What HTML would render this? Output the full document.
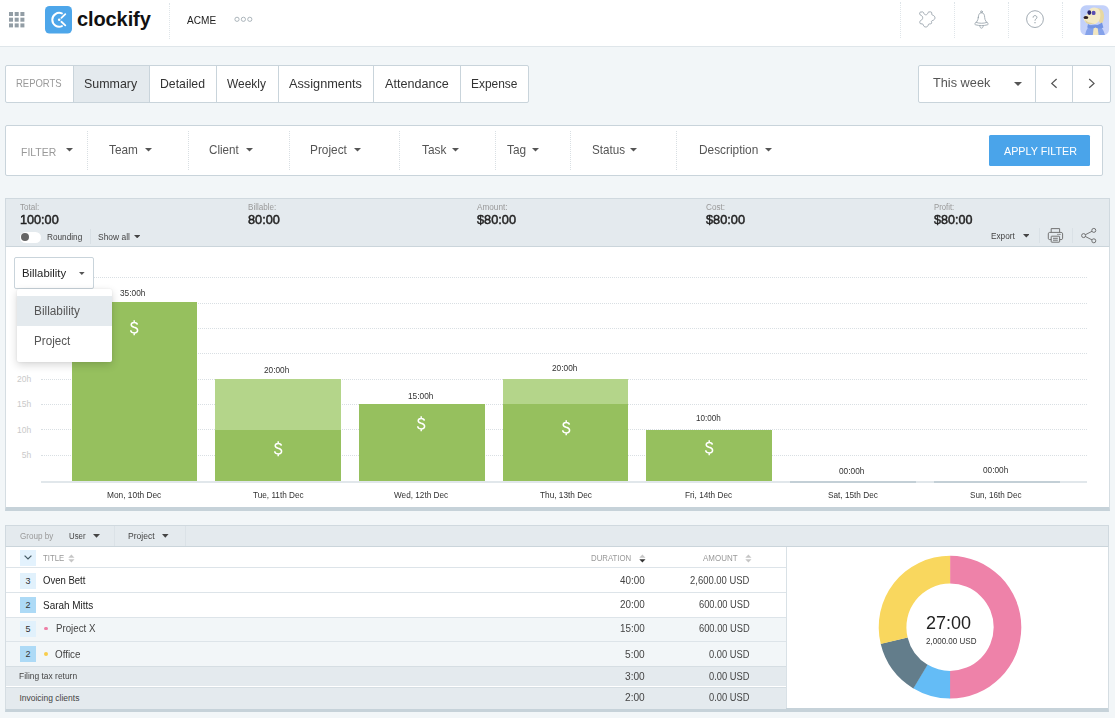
<!DOCTYPE html>
<html>
<head>
<meta charset="utf-8">
<title>Clockify - Summary report</title>
<style>
*{box-sizing:border-box;margin:0;padding:0}
html,body{width:1115px;height:718px;overflow:hidden}
body{background:#f2f6f8;font-family:"Liberation Sans",sans-serif;color:#333;position:relative}
.abs{position:absolute}
.t{position:absolute;white-space:nowrap;line-height:1;transform-origin:0 50%}
#hdr{position:absolute;left:0;top:0;width:1115px;height:47px;background:#fff;border-bottom:1.5px solid #dfe6ea}
.vdot{position:absolute;width:0;border-left:1px dotted #dfe5e9}
</style>
</head>
<body>
<div id="hdr">
 <!-- apps grid -->
 <svg class="abs" style="left:9px;top:12px" width="16" height="16" viewBox="0 0 16 16"><g fill="#929da5">
  <rect x="0" y="0" width="4" height="4"/><rect x="5.7" y="0" width="4" height="4"/><rect x="11.4" y="0" width="4" height="4"/>
  <rect x="0" y="5.7" width="4" height="4"/><rect x="5.7" y="5.7" width="4" height="4"/><rect x="11.4" y="5.7" width="4" height="4"/>
  <rect x="0" y="11.4" width="4" height="4"/><rect x="5.7" y="11.4" width="4" height="4"/><rect x="11.4" y="11.4" width="4" height="4"/>
 </g></svg>
 <!-- logo -->
 <svg class="abs" style="left:45px;top:6px" width="27" height="28" viewBox="0 0 27 28">
  <rect x="0" y="0" width="27" height="27.5" rx="4.5" fill="#4da6ea"/>
  <path d="M16.9 7.45 A6.9 6.9 0 1 0 16.9 20.15" fill="none" stroke="#fff" stroke-width="2" stroke-linecap="round"/>
  <path d="M16.4 11.85 L20.3 8.2 M16.4 15.75 L20.3 19.4" fill="none" stroke="#fff" stroke-width="1.8" stroke-linecap="round"/>
  <circle cx="14.2" cy="13.8" r="1.3" fill="#fff"/>
 </svg>
 <div class="t" id="brand" style="left:77px;top:8.5px;font-size:20px;font-weight:bold;color:#111;letter-spacing:-0.1px">clockify</div>
 <div class="vdot" style="left:169px;top:3px;height:36px"></div>
 <div class="t" style="left:187.3px;top:14.6px;font-size:10.5px;color:#222;transform:scaleX(0.96)">ACME</div>
 <svg class="abs" style="left:233px;top:15px" width="22" height="9" viewBox="0 0 22 9"><g fill="none" stroke="#98a3ab" stroke-width="0.8">
  <circle cx="4" cy="4.3" r="2.1"/><circle cx="10.4" cy="4.3" r="2.1"/><circle cx="16.8" cy="4.3" r="2.1"/></g></svg>
 <div class="vdot" style="left:900px;top:2px;height:36px"></div>
 <div class="vdot" style="left:954px;top:2px;height:36px"></div>
 <div class="vdot" style="left:1008px;top:2px;height:36px"></div>
 <div class="vdot" style="left:1062px;top:2px;height:36px"></div>
 <!-- puzzle -->
 <svg class="abs" style="left:917px;top:10px" width="20" height="19" viewBox="0 0 20 19"><path d="M 3.45 2.09 L 5.70 1.91 C 6.49 1.98 6.71 2.88 6.96 3.61 C 7.33 4.51 8.05 4.77 8.78 4.77 C 9.50 4.77 10.22 4.51 10.59 3.61 C 10.84 2.88 11.06 1.98 11.86 1.91 L 13.74 1.91 C 14.46 1.98 14.75 2.34 14.75 3.07 L 14.75 4.33 C 14.83 4.88 15.30 5.06 15.84 5.24 C 17.29 5.71 17.94 6.69 17.94 7.78 C 17.94 8.86 17.29 9.95 15.84 10.42 C 15.12 10.64 14.39 10.86 14.39 11.58 L 14.68 12.74 C 14.68 13.46 14.32 13.75 13.67 13.83 L 12.22 13.97 C 11.49 14.04 11.35 14.48 11.20 15.02 C 10.95 16.29 10.04 17.01 8.78 17.01 C 7.51 17.01 6.60 16.29 6.35 15.02 C 6.20 14.48 6.06 14.04 5.33 13.97 L 3.81 13.75 C 3.09 13.68 2.80 13.32 2.80 12.67 L 2.87 11.58 C 2.94 10.86 3.52 10.57 4.07 10.31 C 5.15 9.77 5.70 8.86 5.70 7.78 C 5.70 6.69 5.15 5.86 4.07 5.35 C 3.34 5.06 2.72 4.70 2.62 3.97 L 2.72 3.07 C 2.80 2.45 3.01 2.16 3.45 2.09 Z" fill="none" stroke="#98a3ab" stroke-width="0.9" stroke-linejoin="round"/></svg>
 <!-- bell -->
 <svg class="abs" style="left:972px;top:9px" width="20" height="22" viewBox="0 0 20 22"><g fill="none" stroke="#98a3ab" stroke-width="0.85" stroke-linejoin="round" stroke-linecap="round">
  <path d="M6.3 8.6 C6.3 5.8 7.4 3.7 9.5 3.7 C11.6 3.7 12.7 5.8 12.7 8.6 C12.9 11.4 14.4 13.2 16.1 14.4 C16.5 15 16.2 15.6 15.4 15.8 C11.6 16.9 7.4 16.9 3.6 15.8 C2.8 15.6 2.5 15 2.9 14.4 C4.6 13.2 6.1 11.4 6.3 8.6 Z"/>
  <circle cx="9.5" cy="2.8" r="0.9"/>
  <path d="M4.2 13.4 C7.6 14.6 11.4 14.6 14.8 13.4"/>
  <path d="M7.8 17.1 C8 18.5 8.7 19.2 9.5 19.2 C10.3 19.2 11 18.5 11.2 17.1"/></g></svg>
 <!-- help -->
 <svg class="abs" style="left:1025px;top:9px" width="20" height="20" viewBox="0 0 20 20"><circle cx="10" cy="10.1" r="8.4" fill="none" stroke="#98a3ab" stroke-width="0.9"/>
  <path d="M8.1 8.6 C8.1 7.2 9 6.6 10 6.6 C11 6.6 11.9 7.3 11.9 8.4 C11.9 9.8 10 10 10 11.7" fill="none" stroke="#98a3ab" stroke-width="1"/><circle cx="10" cy="13.7" r="0.65" fill="#929da5"/></svg>
 <!-- avatar -->
 <svg class="abs" style="left:1080px;top:4.5px" width="29.5" height="30.5" viewBox="0 0 29.5 30.5">
  <defs><clipPath id="avc"><rect x="0.3" y="0.2" width="28.8" height="30" rx="6"/></clipPath>
  <linearGradient id="avg" x1="0" y1="0" x2="1" y2="1"><stop offset="0" stop-color="#bccdf9"/><stop offset="1" stop-color="#cdd6fb"/></linearGradient>
  <filter id="avb" x="-10%" y="-10%" width="120%" height="120%"><feGaussianBlur stdDeviation="0.45"/></filter></defs>
  <g clip-path="url(#avc)">
   <rect width="29.5" height="30.5" fill="url(#avg)"/>
   <g filter="url(#avb)">
   <path d="M5 30.5 C6 24 9 20 14 19.5 C19 19 23.5 23 25 30.5 Z" fill="#85a2ea"/>
   <path d="M13.6 23 C15 21.6 17 21.8 17.8 23.4 L18.6 30.5 L12.8 30.5 Z" fill="#f1e6c2"/>
   <path d="M17 3.4 C21.5 2.6 24.4 7 24 12 C23.6 16 22.6 18.6 21 18.6 C19.4 18.6 18.6 15 18 12 Z" fill="#e7d8a2"/>
   <path d="M8.4 6.4 C9.6 2.6 14 1.6 17.2 3.2 C20.4 4.8 21 10 19.8 14 C18.8 17.6 15.6 19.6 12.4 19.2 C9.2 18.8 5.4 17.6 4.2 15.4 C3 13.2 4 11.8 5.6 10.6 C7 9.6 7.8 8.2 8.4 6.4 Z" fill="#f4eac6"/>
   <path d="M5 14.6 C7 17.4 11 18.6 14.6 18 C12 19.8 8 19.4 5.8 17.4 Z" fill="#e2d4a0"/>
   <ellipse cx="9.3" cy="7.6" rx="1.9" ry="2.3" fill="#26246a"/>
   <ellipse cx="13.6" cy="7.9" rx="2" ry="2.2" fill="#5a4db2"/>
   <ellipse cx="5.9" cy="12.6" rx="2.4" ry="1.5" fill="#2b1c22"/>
   <path d="M8 19 C12 21.6 18 20.8 22 17.6 L23.4 22.4 C20 24.4 17.6 23.4 15.6 22.4 C13 24 9.6 23.6 7.2 22.4 Z" fill="#7394e4"/>
   </g>
  </g>
 </svg>
</div>
<!-- TABS -->
<div class="abs" style="left:5px;top:64.5px;width:524px;height:38px;background:#fff;border:1px solid #c9d4db;border-radius:2px"></div>
<div class="abs" style="left:73.5px;top:65.5px;width:75.5px;height:36px;background:#e4eaee"></div>
<div class="abs" style="left:73px;top:65.5px;width:1px;height:36px;background:#c9d4db"></div>
<div class="abs" style="left:149px;top:65.5px;width:1px;height:36px;background:#c9d4db"></div>
<div class="abs" style="left:216px;top:65.5px;width:1px;height:36px;background:#c9d4db"></div>
<div class="abs" style="left:278px;top:65.5px;width:1px;height:36px;background:#c9d4db"></div>
<div class="abs" style="left:373px;top:65.5px;width:1px;height:36px;background:#c9d4db"></div>
<div class="abs" style="left:459.5px;top:65.5px;width:1px;height:36px;background:#c9d4db"></div>
<div class="t" style="left:15.80px;top:78.77px;font-size:10.2px;color:#999;transform:scaleX(0.9303);">REPORTS</div>
<div class="t" style="left:84.20px;top:77.96px;font-size:12.8px;color:#333;transform:scaleX(0.9715);">Summary</div>
<div class="t" style="left:159.80px;top:77.96px;font-size:12.8px;color:#333;transform:scaleX(0.9582);">Detailed</div>
<div class="t" style="left:227.40px;top:77.96px;font-size:12.8px;color:#333;transform:scaleX(0.9322);">Weekly</div>
<div class="t" style="left:289.30px;top:77.96px;font-size:12.8px;color:#333;transform:scaleX(0.9949);">Assignments</div>
<div class="t" style="left:384.60px;top:77.96px;font-size:12.8px;color:#333;transform:scaleX(0.9851);">Attendance</div>
<div class="t" style="left:471.00px;top:77.96px;font-size:12.8px;color:#333;transform:scaleX(0.9335);">Expense</div>
<div class="abs" style="left:918px;top:64.5px;width:192.5px;height:38px;background:#fff;border:1px solid #c9d4db;border-radius:2px"></div>
<div class="abs" style="left:1035px;top:65.5px;width:1px;height:36px;background:#c9d4db"></div>
<div class="abs" style="left:1071.5px;top:65.5px;width:1px;height:36px;background:#c9d4db"></div>
<div class="t" style="left:933.20px;top:75.83px;font-size:13.2px;color:#555;transform:scaleX(0.9660);">This week</div>
<svg class="abs" style="left:1014.30px;top:82.00px" width="8" height="4" viewBox="0 0 8 4"><path d="M0 0 L8 0 L4.0 4 Z" fill="#555"/></svg>
<svg class="abs" style="left:1048px;top:76px" width="12" height="15" viewBox="0 0 12 15"><path d="M8.6 3 L3.8 7.4 L8.6 11.8" fill="none" stroke="#555" stroke-width="1.25"/></svg>
<svg class="abs" style="left:1085px;top:76px" width="12" height="15" viewBox="0 0 12 15"><path d="M4.2 3 L9 7.4 L4.2 11.8" fill="none" stroke="#555" stroke-width="1.25"/></svg>
<!-- FILTER -->
<div class="abs" style="left:5px;top:124.7px;width:1097.5px;height:51px;background:#fff;border:1px solid #c9d4db;border-radius:2px"></div>
<div class="t" style="left:20.60px;top:146.87px;font-size:11.5px;color:#999;transform:scaleX(0.9081);">FILTER</div>
<svg class="abs" style="left:65.80px;top:148.20px" width="7" height="3.5" viewBox="0 0 7 3.5"><path d="M0 0 L7 0 L3.5 3.5 Z" fill="#555"/></svg>
<div class="vdot" style="left:87.00px;top:131px;height:39px;border-left-color:#d9dfe3"></div>
<div class="vdot" style="left:188.00px;top:131px;height:39px;border-left-color:#d9dfe3"></div>
<div class="vdot" style="left:288.50px;top:131px;height:39px;border-left-color:#d9dfe3"></div>
<div class="vdot" style="left:399.00px;top:131px;height:39px;border-left-color:#d9dfe3"></div>
<div class="vdot" style="left:494.50px;top:131px;height:39px;border-left-color:#d9dfe3"></div>
<div class="vdot" style="left:570.00px;top:131px;height:39px;border-left-color:#d9dfe3"></div>
<div class="vdot" style="left:676.00px;top:131px;height:39px;border-left-color:#d9dfe3"></div>
<div class="t" style="left:109.30px;top:143.95px;font-size:12.7px;color:#555;transform:scaleX(0.9306);">Team</div>
<svg class="abs" style="left:145.20px;top:148.20px" width="7" height="3.5" viewBox="0 0 7 3.5"><path d="M0 0 L7 0 L3.5 3.5 Z" fill="#555"/></svg>
<div class="t" style="left:208.50px;top:143.95px;font-size:12.7px;color:#555;transform:scaleX(0.9147);">Client</div>
<svg class="abs" style="left:246.20px;top:148.20px" width="7" height="3.5" viewBox="0 0 7 3.5"><path d="M0 0 L7 0 L3.5 3.5 Z" fill="#555"/></svg>
<div class="t" style="left:310.20px;top:143.95px;font-size:12.7px;color:#555;transform:scaleX(0.9335);">Project</div>
<svg class="abs" style="left:354.20px;top:148.20px" width="7" height="3.5" viewBox="0 0 7 3.5"><path d="M0 0 L7 0 L3.5 3.5 Z" fill="#555"/></svg>
<div class="t" style="left:421.50px;top:143.95px;font-size:12.7px;color:#555;transform:scaleX(0.9344);">Task</div>
<svg class="abs" style="left:452.20px;top:148.20px" width="7" height="3.5" viewBox="0 0 7 3.5"><path d="M0 0 L7 0 L3.5 3.5 Z" fill="#555"/></svg>
<div class="t" style="left:506.70px;top:143.95px;font-size:12.7px;color:#555;transform:scaleX(0.9328);">Tag</div>
<svg class="abs" style="left:531.80px;top:148.20px" width="7" height="3.5" viewBox="0 0 7 3.5"><path d="M0 0 L7 0 L3.5 3.5 Z" fill="#555"/></svg>
<div class="t" style="left:591.50px;top:143.95px;font-size:12.7px;color:#555;transform:scaleX(0.9193);">Status</div>
<svg class="abs" style="left:630.40px;top:148.20px" width="7" height="3.5" viewBox="0 0 7 3.5"><path d="M0 0 L7 0 L3.5 3.5 Z" fill="#555"/></svg>
<div class="t" style="left:698.70px;top:143.95px;font-size:12.7px;color:#555;transform:scaleX(0.9335);">Description</div>
<svg class="abs" style="left:764.80px;top:148.20px" width="7" height="3.5" viewBox="0 0 7 3.5"><path d="M0 0 L7 0 L3.5 3.5 Z" fill="#555"/></svg>
<div class="abs" style="left:989.4px;top:134.5px;width:101px;height:31.6px;background:#4aa4ea;border-radius:1.5px"></div>
<div class="t" style="left:1004.00px;top:145.63px;font-size:11.3px;color:#fff;transform:scaleX(0.9528);">APPLY FILTER</div>
<!-- STATS -->
<div class="abs" style="left:5px;top:198px;width:1105px;height:49px;background:#e4eaee;border:1px solid #d0d9df"></div>
<div class="t" style="left:19.60px;top:202.80px;font-size:8.5px;color:#999;transform:scaleX(0.9500);">Total:</div>
<div class="t" style="left:19.60px;top:213.09px;font-size:13.6px;color:#222;transform:scaleX(0.9304);-webkit-text-stroke:0.5px #222;">100:00</div>
<div class="t" style="left:248.20px;top:202.80px;font-size:8.5px;color:#999;transform:scaleX(0.9507);">Billable:</div>
<div class="t" style="left:248.20px;top:213.09px;font-size:13.6px;color:#222;transform:scaleX(0.9344);-webkit-text-stroke:0.5px #222;">80:00</div>
<div class="t" style="left:477.00px;top:202.80px;font-size:8.5px;color:#999;transform:scaleX(0.9635);">Amount:</div>
<div class="t" style="left:477.00px;top:213.09px;font-size:13.6px;color:#222;transform:scaleX(0.9376);-webkit-text-stroke:0.5px #222;">$80:00</div>
<div class="t" style="left:705.50px;top:202.80px;font-size:8.5px;color:#999;transform:scaleX(0.9577);">Cost:</div>
<div class="t" style="left:705.50px;top:213.09px;font-size:13.6px;color:#222;transform:scaleX(0.9376);-webkit-text-stroke:0.5px #222;">$80:00</div>
<div class="t" style="left:934.30px;top:202.80px;font-size:8.5px;color:#999;transform:scaleX(0.9099);">Profit:</div>
<div class="t" style="left:934.30px;top:213.09px;font-size:13.6px;color:#222;transform:scaleX(0.9231);-webkit-text-stroke:0.5px #222;">$80:00</div>
<div class="abs" style="left:20px;top:232px;width:20.5px;height:10.5px;background:#fff;border-radius:6px"></div>
<div class="abs" style="left:21.2px;top:233.3px;width:8px;height:8px;background:#666;border-radius:4px"></div>
<div class="t" style="left:47.20px;top:233.10px;font-size:8.5px;color:#444;transform:scaleX(0.9673);">Rounding</div>
<div class="abs" style="left:90px;top:229px;width:1px;height:15px;background:#d9e0e5"></div>
<div class="t" style="left:98.00px;top:233.10px;font-size:8.5px;color:#444;transform:scaleX(0.9929);">Show all</div>
<svg class="abs" style="left:133.90px;top:235.00px" width="6.4" height="3.3" viewBox="0 0 6.4 3.3"><path d="M0 0 L6.4 0 L3.2 3.3 Z" fill="#444"/></svg>
<div class="t" style="left:990.90px;top:231.90px;font-size:8.5px;color:#444;transform:scaleX(0.9688);">Export</div>
<svg class="abs" style="left:1022.80px;top:234.20px" width="6.6" height="3.5" viewBox="0 0 6.6 3.5"><path d="M0 0 L6.6 0 L3.3 3.5 Z" fill="#444"/></svg>
<div class="abs" style="left:1039px;top:228px;width:1px;height:15px;background:#dae1e6"></div>
<div class="abs" style="left:1072px;top:228px;width:1px;height:15px;background:#dae1e6"></div>
<svg class="abs" style="left:1047px;top:227px" width="17" height="17" viewBox="0 0 17 17"><g fill="none" stroke="#666" stroke-width="0.9" stroke-linejoin="round">
<path d="M4.2 5.4 L4.2 1.6 L12.6 1.6 L12.6 5.4"/>
<path d="M4.2 12.6 L2.6 12.6 C1.8 12.6 1.3 12.1 1.3 11.3 L1.3 6.8 C1.3 6 1.8 5.4 2.6 5.4 L14.2 5.4 C15 5.4 15.6 6 15.6 6.8 L15.6 11.3 C15.6 12.1 15 12.6 14.2 12.6 L12.6 12.6"/>
<rect x="4.2" y="9.2" width="8.4" height="6" rx="0.5"/>
<path d="M6 11.3 L10.8 11.3 M6 13.2 L10.8 13.2"/></g><circle cx="12.9" cy="7.4" r="0.6" fill="#666"/><circle cx="11" cy="7.4" r="0.6" fill="#666"/></svg>
<svg class="abs" style="left:1080px;top:227px" width="18" height="18" viewBox="0 0 18 18"><g fill="none" stroke="#666" stroke-width="0.9">
<circle cx="13.8" cy="3.4" r="2"/><circle cx="3.6" cy="8.6" r="2"/><circle cx="13.8" cy="13.8" r="2"/>
<path d="M5.4 7.7 L12 4.3 M5.4 9.5 L12 12.9"/></g></svg>
<!-- CHART -->
<div class="abs" style="left:5px;top:246px;width:1105px;height:265px;background:#fff;border:1px solid #d5dde2;border-top:1px solid #cbd5db;border-bottom:4px solid #c6d2d9"></div>
<div class="abs" style="left:41px;top:454.73px;width:1046px;height:0;border-top:1px dotted #d9dfe3"></div>
<div class="abs" style="left:41px;top:429.36px;width:1046px;height:0;border-top:1px dotted #d9dfe3"></div>
<div class="abs" style="left:41px;top:403.99px;width:1046px;height:0;border-top:1px dotted #d9dfe3"></div>
<div class="abs" style="left:41px;top:378.62px;width:1046px;height:0;border-top:1px dotted #d9dfe3"></div>
<div class="abs" style="left:41px;top:353.25px;width:1046px;height:0;border-top:1px dotted #d9dfe3"></div>
<div class="abs" style="left:41px;top:327.88px;width:1046px;height:0;border-top:1px dotted #d9dfe3"></div>
<div class="abs" style="left:41px;top:302.51px;width:1046px;height:0;border-top:1px dotted #d9dfe3"></div>
<div class="abs" style="left:41px;top:277.14px;width:1046px;height:0;border-top:1px dotted #d9dfe3"></div>
<div class="abs" style="left:41px;top:480.60px;width:1046px;height:2px;background:#e1e7eb"></div>
<div class="t" style="left:21.75px;top:451.03px;font-size:8.5px;color:#c9c9c9;">5h</div>
<div class="t" style="left:17.02px;top:425.66px;font-size:8.5px;color:#c9c9c9;">10h</div>
<div class="t" style="left:17.02px;top:400.29px;font-size:8.5px;color:#c9c9c9;">15h</div>
<div class="t" style="left:17.02px;top:374.92px;font-size:8.5px;color:#c9c9c9;">20h</div>
<div class="abs" style="left:71.60px;top:302.40px;width:125.8px;height:178.20px;background:#96c05e"></div>
<div class="abs" style="left:215.30px;top:379.20px;width:125.8px;height:50.70px;background:#b4d58a"></div>
<div class="abs" style="left:215.30px;top:429.90px;width:125.8px;height:50.70px;background:#96c05e"></div>
<div class="abs" style="left:359.00px;top:403.80px;width:125.8px;height:76.80px;background:#96c05e"></div>
<div class="abs" style="left:502.70px;top:379.20px;width:125.8px;height:24.60px;background:#b4d58a"></div>
<div class="abs" style="left:502.70px;top:403.80px;width:125.8px;height:76.80px;background:#96c05e"></div>
<div class="abs" style="left:646.40px;top:430.20px;width:125.8px;height:50.40px;background:#96c05e"></div>
<div class="abs" style="left:790.10px;top:480.60px;width:125.8px;height:2.2px;background:#c3cfd6"></div>
<div class="abs" style="left:933.80px;top:480.60px;width:125.8px;height:2.2px;background:#c3cfd6"></div>
<div class="t" style="left:120.00px;top:288.92px;font-size:8.6px;color:#333;transform:scaleX(0.9656);">35:00h</div>
<div class="t" style="left:264.00px;top:365.72px;font-size:8.6px;color:#333;transform:scaleX(0.9618);">20:00h</div>
<div class="t" style="left:408.00px;top:391.82px;font-size:8.6px;color:#333;transform:scaleX(0.9656);">15:00h</div>
<div class="t" style="left:551.50px;top:363.72px;font-size:8.6px;color:#333;transform:scaleX(0.9656);">20:00h</div>
<div class="t" style="left:695.80px;top:414.42px;font-size:8.6px;color:#333;transform:scaleX(0.9466);">10:00h</div>
<div class="t" style="left:839.40px;top:467.02px;font-size:8.6px;color:#333;transform:scaleX(0.9656);">00:00h</div>
<div class="t" style="left:982.90px;top:465.82px;font-size:8.6px;color:#333;transform:scaleX(0.9618);">00:00h</div>
<svg class="abs" style="left:127.70px;top:319.00px" width="12" height="18" viewBox="0 0 12 18"><path d="M9.4 5.6 C9.2 4.2 8 3.4 6.2 3.4 C4.4 3.4 3.2 4.3 3.2 5.7 C3.2 7.2 4.4 7.8 6.2 8.3 C8.2 8.8 9.6 9.5 9.6 11.3 C9.6 12.9 8.2 13.9 6.2 13.9 C4.2 13.9 2.8 12.9 2.7 11.3 M6.2 1.2 L6.2 3.4 M6.2 13.9 L6.2 16.2" fill="none" stroke="#fff" stroke-width="1.5"/></svg>
<svg class="abs" style="left:271.60px;top:439.80px" width="12" height="18" viewBox="0 0 12 18"><path d="M9.4 5.6 C9.2 4.2 8 3.4 6.2 3.4 C4.4 3.4 3.2 4.3 3.2 5.7 C3.2 7.2 4.4 7.8 6.2 8.3 C8.2 8.8 9.6 9.5 9.6 11.3 C9.6 12.9 8.2 13.9 6.2 13.9 C4.2 13.9 2.8 12.9 2.7 11.3 M6.2 1.2 L6.2 3.4 M6.2 13.9 L6.2 16.2" fill="none" stroke="#fff" stroke-width="1.5"/></svg>
<svg class="abs" style="left:415.00px;top:415.20px" width="12" height="18" viewBox="0 0 12 18"><path d="M9.4 5.6 C9.2 4.2 8 3.4 6.2 3.4 C4.4 3.4 3.2 4.3 3.2 5.7 C3.2 7.2 4.4 7.8 6.2 8.3 C8.2 8.8 9.6 9.5 9.6 11.3 C9.6 12.9 8.2 13.9 6.2 13.9 C4.2 13.9 2.8 12.9 2.7 11.3 M6.2 1.2 L6.2 3.4 M6.2 13.9 L6.2 16.2" fill="none" stroke="#fff" stroke-width="1.5"/></svg>
<svg class="abs" style="left:559.60px;top:419.00px" width="12" height="18" viewBox="0 0 12 18"><path d="M9.4 5.6 C9.2 4.2 8 3.4 6.2 3.4 C4.4 3.4 3.2 4.3 3.2 5.7 C3.2 7.2 4.4 7.8 6.2 8.3 C8.2 8.8 9.6 9.5 9.6 11.3 C9.6 12.9 8.2 13.9 6.2 13.9 C4.2 13.9 2.8 12.9 2.7 11.3 M6.2 1.2 L6.2 3.4 M6.2 13.9 L6.2 16.2" fill="none" stroke="#fff" stroke-width="1.5"/></svg>
<svg class="abs" style="left:702.70px;top:439.00px" width="12" height="18" viewBox="0 0 12 18"><path d="M9.4 5.6 C9.2 4.2 8 3.4 6.2 3.4 C4.4 3.4 3.2 4.3 3.2 5.7 C3.2 7.2 4.4 7.8 6.2 8.3 C8.2 8.8 9.6 9.5 9.6 11.3 C9.6 12.9 8.2 13.9 6.2 13.9 C4.2 13.9 2.8 12.9 2.7 11.3 M6.2 1.2 L6.2 3.4 M6.2 13.9 L6.2 16.2" fill="none" stroke="#fff" stroke-width="1.5"/></svg>
<div class="t" style="left:106.60px;top:490.62px;font-size:8.6px;color:#333;transform:scaleX(0.9709);">Mon, 10th Dec</div>
<div class="t" style="left:252.60px;top:490.62px;font-size:8.6px;color:#333;transform:scaleX(0.9555);">Tue, 11th Dec</div>
<div class="t" style="left:394.00px;top:490.62px;font-size:8.6px;color:#333;transform:scaleX(0.9554);">Wed, 12th Dec</div>
<div class="t" style="left:539.80px;top:490.62px;font-size:8.6px;color:#333;transform:scaleX(0.9608);">Thu, 13th Dec</div>
<div class="t" style="left:684.90px;top:490.62px;font-size:8.6px;color:#333;transform:scaleX(0.9568);">Fri, 14th Dec</div>
<div class="t" style="left:827.70px;top:490.62px;font-size:8.6px;color:#333;transform:scaleX(0.9576);">Sat, 15th Dec</div>
<div class="t" style="left:970.00px;top:490.62px;font-size:8.6px;color:#333;transform:scaleX(0.9449);">Sun, 16th Dec</div>
<div class="abs" style="left:14px;top:256.5px;width:80px;height:32px;background:#fff;border:1px solid #c9d4db;border-radius:2px"></div>
<div class="t" style="left:22.20px;top:268.47px;font-size:11.5px;color:#222;transform:scaleX(0.9858);">Billability</div>
<svg class="abs" style="left:79.10px;top:272.00px" width="5.6" height="3" viewBox="0 0 5.6 3"><path d="M0 0 L5.6 0 L2.8 3 Z" fill="#555"/></svg>
<div class="abs" style="left:17px;top:288.7px;width:95.3px;height:73.5px;background:#fff;border-radius:2px;box-shadow:0 3px 8px rgba(0,0,0,0.16),0 0 2px rgba(0,0,0,0.08)"></div>
<div class="abs" style="left:17px;top:295.8px;width:95.3px;height:30px;background:#e4eaee"></div>
<div class="t" style="left:33.90px;top:305.02px;font-size:12.5px;color:#555;transform:scaleX(0.9460);">Billability</div>
<div class="t" style="left:33.90px;top:335.12px;font-size:12.5px;color:#555;transform:scaleX(0.9331);">Project</div>
<!-- TABLE -->
<div class="abs" style="left:5px;top:525.3px;width:1104px;height:22px;background:#e4eaee;border:1px solid #d0d9df"></div>
<div class="t" style="left:20.40px;top:532.00px;font-size:8.5px;color:#999;transform:scaleX(0.9553);">Group by</div>
<div class="t" style="left:68.90px;top:532.00px;font-size:8.5px;color:#444;transform:scaleX(0.9194);">User</div>
<svg class="abs" style="left:93.30px;top:534.20px" width="7" height="3.7" viewBox="0 0 7 3.7"><path d="M0 0 L7 0 L3.5 3.7 Z" fill="#444"/></svg>
<div class="abs" style="left:114px;top:526.3px;width:1px;height:20px;background:#dbe2e7"></div>
<div class="t" style="left:128.40px;top:532.00px;font-size:8.5px;color:#444;transform:scaleX(1.0055);">Project</div>
<svg class="abs" style="left:162.20px;top:534.20px" width="6.6" height="3.7" viewBox="0 0 6.6 3.7"><path d="M0 0 L6.6 0 L3.3 3.7 Z" fill="#444"/></svg>
<div class="abs" style="left:184.5px;top:526.3px;width:1px;height:20px;background:#dbe2e7"></div>
<div class="abs" style="left:5px;top:546.3px;width:1104px;height:166px;background:#fff;border:1px solid #d5dde2;border-top:1px solid #cbd5db;border-bottom:4px solid #c6d2d9"></div>
<div class="abs" style="left:6px;top:567.4px;width:780px;height:24.80px;background:#fff;border-top:1px solid #dde4e9"></div>
<div class="abs" style="left:6px;top:592.2px;width:780px;height:24.30px;background:#fff;border-top:1px solid #dde4e9"></div>
<div class="abs" style="left:6px;top:616.5px;width:780px;height:24.80px;background:#f2f6f8;border-top:1px solid #dde4e9"></div>
<div class="abs" style="left:6px;top:641.3px;width:780px;height:24.40px;background:#f2f6f8;border-top:1px solid #dde4e9"></div>
<div class="abs" style="left:6px;top:665.7px;width:780px;height:20.80px;background:#e4eaee;border-top:1px solid #d6dee3"></div>
<div class="abs" style="left:6px;top:686.5px;width:780px;height:22.00px;background:#e4eaee;border-top:1px solid #d6dee3"></div>
<div class="abs" style="left:786px;top:547.3px;width:1px;height:161px;background:#d9e1e6"></div>
<div class="abs" style="left:19.7px;top:550.2px;width:16.2px;height:15.4px;background:#e3f2fd"></div>
<svg class="abs" style="left:23px;top:553px" width="10" height="9" viewBox="0 0 10 9"><path d="M1.6 2.6 L5 6 L8.4 2.6" fill="none" stroke="#455a64" stroke-width="1.2"/></svg>
<div class="t" style="left:43.40px;top:554.25px;font-size:8.8px;color:#999;transform:scaleX(0.8848);">TITLE</div>
<svg class="abs" style="left:67.8px;top:554px" width="7" height="9" viewBox="0 0 7 9"><path d="M0.3 3.8 L3.4 0.4 L6.5 3.8 Z" fill="#c6c6c6"/><path d="M0.3 5.2 L3.4 8.6 L6.5 5.2 Z" fill="#c6c6c6"/></svg>
<div class="t" style="left:591.20px;top:554.25px;font-size:8.8px;color:#999;transform:scaleX(0.8874);">DURATION</div>
<svg class="abs" style="left:639.1px;top:554px" width="7" height="9" viewBox="0 0 7 9"><path d="M0.3 3.8 L3.4 0.4 L6.5 3.8 Z" fill="#c6c6c6"/><path d="M0.3 5.2 L3.4 8.6 L6.5 5.2 Z" fill="#333"/></svg>
<div class="t" style="left:703.10px;top:554.25px;font-size:8.8px;color:#999;transform:scaleX(0.9048);">AMOUNT</div>
<svg class="abs" style="left:745.2px;top:554px" width="7" height="9" viewBox="0 0 7 9"><path d="M0.3 3.8 L3.4 0.4 L6.5 3.8 Z" fill="#c6c6c6"/><path d="M0.3 5.2 L3.4 8.6 L6.5 5.2 Z" fill="#c6c6c6"/></svg>
<div class="abs" style="left:19.7px;top:572.8px;width:16.2px;height:16.20px;background:#e1f1fc"></div>
<div class="t" style="left:25.40px;top:576.98px;font-size:9px;color:#333;">3</div>
<div class="t" style="left:43.00px;top:574.86px;font-size:10.8px;color:#222;transform:scaleX(0.8829);">Oven Bett</div>
<div class="abs" style="left:19.7px;top:597.2px;width:16.2px;height:15.80px;background:#addaf6"></div>
<div class="t" style="left:25.40px;top:601.18px;font-size:9px;color:#333;">2</div>
<div class="t" style="left:43.00px;top:600.06px;font-size:10.8px;color:#222;transform:scaleX(0.9210);">Sarah Mitts</div>
<div class="abs" style="left:19.7px;top:621.2px;width:16.2px;height:15.40px;background:#e1f1fc"></div>
<div class="t" style="left:25.40px;top:624.98px;font-size:9px;color:#333;">5</div>
<div class="abs" style="left:44.1px;top:626.6px;width:3.6px;height:3.6px;border-radius:2px;background:#ee7fa6"></div>
<div class="t" style="left:55.60px;top:623.36px;font-size:10.8px;color:#444;transform:scaleX(0.8992);">Project X</div>
<div class="abs" style="left:19.7px;top:646.3px;width:16.2px;height:15.80px;background:#addaf6"></div>
<div class="t" style="left:25.40px;top:650.28px;font-size:9px;color:#333;">2</div>
<div class="abs" style="left:44.1px;top:652.4px;width:3.6px;height:3.6px;border-radius:2px;background:#f8cd4c"></div>
<div class="t" style="left:54.90px;top:648.76px;font-size:10.8px;color:#444;transform:scaleX(0.9103);">Office</div>
<div class="t" style="left:19.40px;top:672.00px;font-size:8.5px;color:#444;transform:scaleX(0.9918);">Filing tax return</div>
<div class="t" style="left:19.40px;top:693.90px;font-size:8.5px;color:#444;">Invoicing clients</div>
<div class="t" style="left:620.30px;top:575.53px;font-size:10px;color:#444;transform:scaleX(0.9870);">40:00</div>
<div class="t" style="left:689.90px;top:575.53px;font-size:10px;color:#444;transform:scaleX(0.9456);">2,600.00 USD</div>
<div class="t" style="left:620.30px;top:600.43px;font-size:10px;color:#444;transform:scaleX(0.9870);">20:00</div>
<div class="t" style="left:698.50px;top:600.43px;font-size:10px;color:#444;transform:scaleX(0.9325);">600.00 USD</div>
<div class="t" style="left:620.30px;top:624.13px;font-size:10px;color:#444;transform:scaleX(0.9870);">15:00</div>
<div class="t" style="left:698.50px;top:624.13px;font-size:10px;color:#444;transform:scaleX(0.9325);">600.00 USD</div>
<div class="t" style="left:625.30px;top:649.63px;font-size:10px;color:#444;transform:scaleX(1.0122);">5:00</div>
<div class="t" style="left:708.90px;top:649.63px;font-size:10px;color:#444;transform:scaleX(0.9318);">0.00 USD</div>
<div class="t" style="left:625.30px;top:671.63px;font-size:10px;color:#444;transform:scaleX(1.0122);">3:00</div>
<div class="t" style="left:708.90px;top:671.63px;font-size:10px;color:#444;transform:scaleX(0.9318);">0.00 USD</div>
<div class="t" style="left:625.30px;top:692.83px;font-size:10px;color:#444;transform:scaleX(1.0122);">2:00</div>
<div class="t" style="left:708.90px;top:692.83px;font-size:10px;color:#444;transform:scaleX(0.9318);">0.00 USD</div>
<!-- DONUT -->
<svg class="abs" style="left:0;top:0" width="1115" height="718" viewBox="0 0 1115 718"><path d="M950.10 555.80 A71.4 71.4 0 1 1 949.73 698.60 L949.87 670.90 A43.7 43.7 0 1 0 950.10 583.50 Z" fill="#ee82a9"/><path d="M950.10 698.60 A71.4 71.4 0 0 1 913.11 688.27 L927.46 664.58 A43.7 43.7 0 0 0 950.10 670.90 Z" fill="#64bcf6"/><path d="M913.33 688.40 A71.4 71.4 0 0 1 880.67 643.87 L907.61 637.40 A43.7 43.7 0 0 0 927.59 664.66 Z" fill="#637d8b"/><path d="M880.73 644.11 A71.4 71.4 0 0 1 950.10 555.80 L950.10 583.50 A43.7 43.7 0 0 0 907.64 637.55 Z" fill="#f9d75e"/></svg>
<div class="t" style="left:925.70px;top:613.15px;font-size:19.2px;color:#222;transform:scaleX(0.9387);">27:00</div>
<div class="t" style="left:925.70px;top:637.42px;font-size:8.6px;color:#333;transform:scaleX(0.9348);">2,000.00 USD</div>
</body>
</html>
